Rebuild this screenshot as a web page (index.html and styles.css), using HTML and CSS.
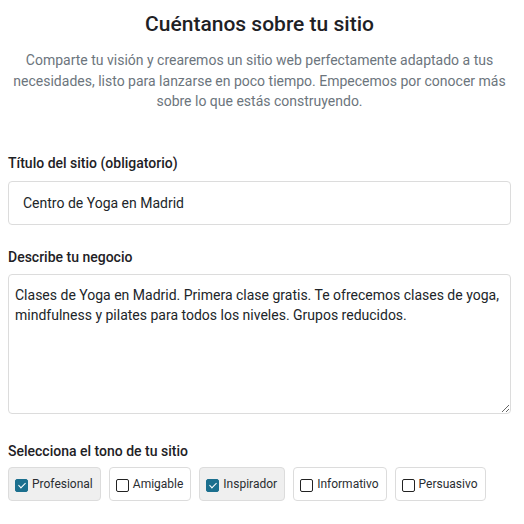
FILE: index.html
```html
<!DOCTYPE html>
<html lang="es">
<head>
<meta charset="utf-8">
<link rel="stylesheet" href="styles.css">
</head>
<body>
<div class="page">
  <header class="intro">
    <h1 class="title">Cuéntanos sobre tu sitio</h1>
    <p class="lead">Comparte tu visión y crearemos un sitio web perfectamente adaptado a tus necesidades, listo para lanzarse en poco tiempo. Empecemos por conocer más sobre lo que estás construyendo.</p>
  </header>

  <div class="field field-title">
    <label class="label" for="t">Título del sitio (obligatorio)</label>
    <input id="t" class="input" type="text" value="Centro de Yoga en Madrid">
  </div>

  <div class="field field-desc">
    <label class="label" for="d">Describe tu negocio</label>
    <textarea id="d" class="textarea">Clases de Yoga en Madrid. Primera clase gratis. Te ofrecemos clases de yoga, mindfulness y pilates para todos los niveles. Grupos reducidos.</textarea>
  </div>

  <div class="field field-tone">
    <div class="label">Selecciona el tono de tu sitio</div>
    <div class="tones">
      <label class="tone on"><span class="box"></span>Profesional</label>
      <label class="tone"><span class="box"></span>Amigable</label>
      <label class="tone on"><span class="box"></span>Inspirador</label>
      <label class="tone"><span class="box"></span>Informativo</label>
      <label class="tone"><span class="box"></span>Persuasivo</label>
    </div>
  </div>
</div>
</body>
</html>
```

FILE: styles.css
```css
* { box-sizing: border-box; }
html, body { margin: 0; padding: 0; background: #fff; }
body {
  font-family: Roboto, "Noto Sans", sans-serif;
  color: #212529;
  font-size: 14px;
}
.page {
  padding: 8px 13px 0 8px;
}
.intro { text-align: center; }
.title {
  margin: 1px 0 0;
  font-size: 21px;
  font-weight: 500;
  line-height: 30px;
  color: #1e2125;
}
.lead {
  margin: 11px 0 0;
  color: #6c757d;
  font-size: 14px;
  line-height: 20.5px;
}
.field-title { margin-top: 41px; }
.field-desc { margin-top: 22px; }
.field-tone { margin-top: 27px; }
.label {
  display: block;
  font-weight: 500;
  font-size: 14px;
  line-height: 20px;
  margin-bottom: 8px;
  color: #1e2125;
}
.field-desc .label { margin-bottom: 7px; }
.field-tone .label { margin-bottom: 6px; }
.input, .textarea {
  display: block;
  width: 100%;
  font: inherit;
  color: #212529;
  border: 1px solid #dcdcdc;
  border-radius: 4px;
  background: #fff;
  outline: none;
}
.input { height: 44px; padding: 0 14px; }
.textarea { height: 140px; padding: 10px 6px; line-height: 20px; resize: vertical; }
.tones { display: flex; gap: 8px; }
.tone {
  display: flex;
  align-items: center;
  gap: 4px;
  height: 34px;
  padding: 0 7px 0 6px;
  border: 1px solid #dcdcdc;
  border-radius: 4px;
  background: #fff;
  font-size: 12px;
  color: #2a2d31;
}
.tone.on { background: #efefef; }
.box {
  flex: none;
  width: 13px;
  height: 13px;
  border: 1.5px solid #222;
  border-radius: 2px;
  margin-top: 3px;
  position: relative;
  background: #fff;
}
.tone.on .box {
  background: #1b6f8e;
  border-color: #1b6f8e;
}
.tone.on .box::after {
  content: "";
  position: absolute;
  left: 3.5px;
  top: 1px;
  width: 3px;
  height: 6px;
  border: solid #fff;
  border-width: 0 1.3px 1.3px 0;
  transform: rotate(45deg);
}
```
